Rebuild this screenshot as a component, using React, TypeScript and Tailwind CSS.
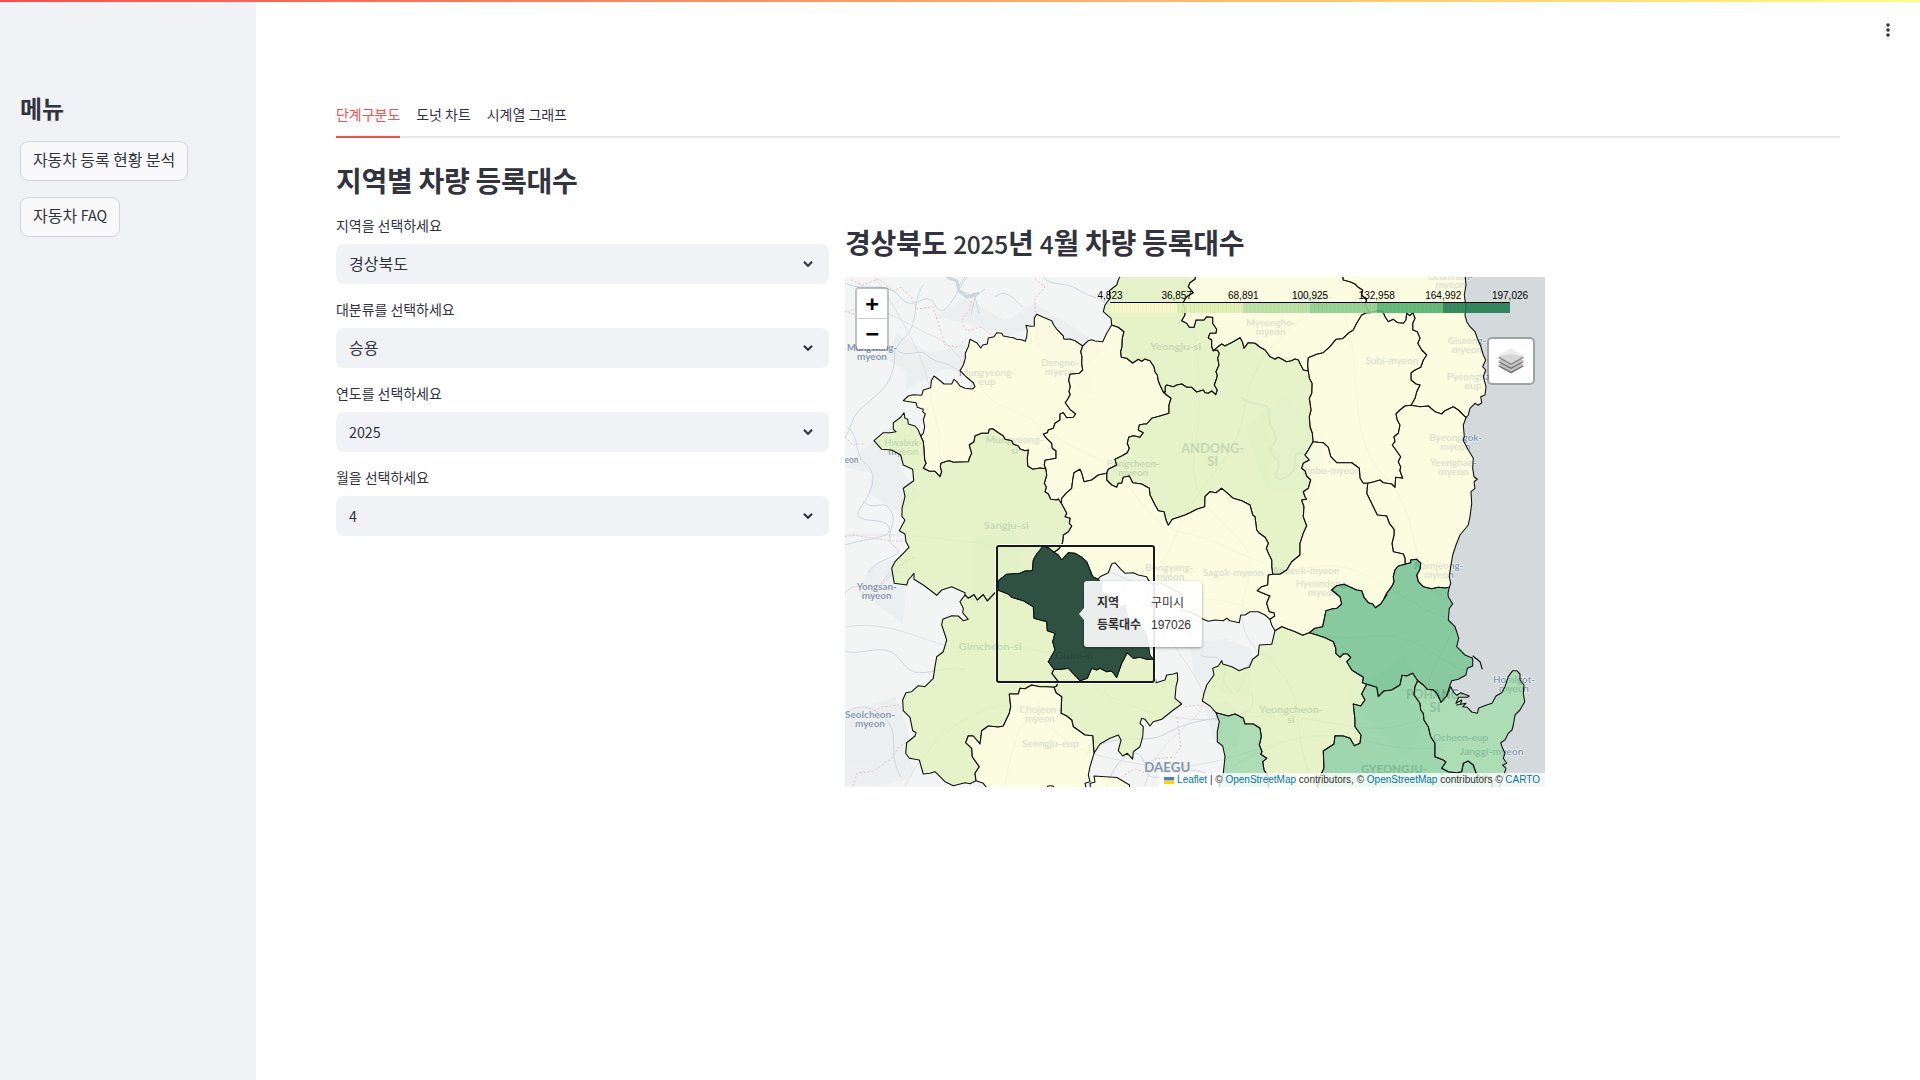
import React from "react";

type Sheet = [number, number, string];

// Survey sheets: origin of the sheet, used to place its traced outlines.
const A: [number, number] = [840, 210];
const B: [number, number] = [1190, 270];
const C: [number, number] = [840, 400];
const D: [number, number] = [1190, 400];
const E: [number, number] = [840, 590];
const F: [number, number] = [1190, 590];
const G: [number, number] = [1040, 270];
const H: [number, number] = [1000, 530];

const s = (o: [number, number], pts: string): Sheet => [o[0], o[1], pts];

// Outlines are stored in thirds of a pixel relative to the sheet origin.
const trace = (sheets: Sheet[]): number[][] =>
  sheets.flatMap(([ox, oy, pts]) =>
    pts.split(" ").map((p) => {
      const [x, y] = p.split(",").map(Number);
      return [ox + x / 3 - 845, oy + y / 3 - 277];
    })
  );

// Borders shared between neighbouring districts.
const arcs: Record<string, number[][]> = {
  munOut: trace([
    s(A, "728,408 705,392 690,387 672,388 670,378 648,355 641,345 635,332 610,322 590,313 583,325 583,348 570,349 558,346 562,362 560,380 556,394 545,389 530,388 520,383 510,382 490,378 485,370 470,368 462,380 445,384 442,402 428,405 422,414 410,398 390,388 385,410 376,430 376,445 370,465 360,482 380,502 400,518 405,530 398,537 375,535 360,528 350,515 342,508 335,522 312,522 298,510 282,498 274,512 272,533 250,540 245,556 220,554 205,558 190,572"),
    s(C, "228,8 232,22 250,28 248,35 256,42 250,60 254,80 250,100 242,108"),
  ]),
  munSan: trace([
    s(C, "242,108 250,125 252,150 254,180 258,190 250,205 268,214 285,214 300,230 305,215 301,200 303,190 320,184 328,182 340,187 385,185 390,170 395,160 388,135 402,125 405,108 425,100 445,100 448,88 458,86 475,98 490,108 495,118 515,122 520,133 535,138 540,147 555,152 565,150 562,175 563,198 578,208 600,204 617,206"),
  ]),
  munYec: trace([
    s(A, "728,408 722,425 726,440 725,460 728,480 718,490 690,493 686,510 691,530 687,545 691,553 685,565 676,578"),
    s(C, "690,28 707,42 700,52 680,53 670,38 660,42 660,60 645,70 640,85 625,90 622,98 610,102 620,115 635,130 637,145 648,152 648,175 615,181 613,195 617,206"),
  ]),
  yecSan: trace([s(C, "617,206 620,225 613,250 619,262 615,275 625,282 632,298 650,300 655,297 664,310")]),
  sanUis: trace([s(C, "664,310 672,325 680,340 675,350 690,355 688,370 695,378 685,395 670,405 668,425 665,435 655,448 642,457")]),
  yecUis: trace([s(C, "664,310 665,295 680,278 695,265 698,240 702,218 720,208 725,220 732,245 755,240 775,225 800,220")]),
  yecAnd: trace([
    s(C, "800,220 805,208 830,195 825,178 845,168 862,158 868,145 862,130 866,112 880,107 900,112 910,98 895,90 898,75 912,72 920,72 935,55 960,48 987,40"),
    s(G, "387,405 393,385 380,375 370,366"),
  ]),
  yecYeo: trace([s(G, "215,165 235,172 252,185 247,205 246,230 242,245 244,262 260,265 278,279 295,268 305,274 315,267 330,272 342,290 345,305 352,315 355,332 360,345 370,366")]),
  yecOut: trace([s(G, "215,165 200,190 188,215 165,213 155,209 145,212 128,228")]),
  yeoOut: trace([s(G, "215,165 213,145 190,125 195,105 210,85 208,62 230,45 235,30 242,15")]),
  yeoBon: trace([s(G, "520,242 515,230 515,210 505,203 510,190 528,190 530,178 518,160 518,142 500,140 492,150 468,150 462,172 448,172 440,160 425,152 435,135 435,115 428,100 440,80 460,68 445,50 450,38 465,28 468,15")]),
  yeoAnd: trace([s(G, "520,242 532,240 538,250 533,265 537,285 528,305 532,315 530,325 523,345 532,360 527,374 515,363 505,370 495,368 490,360 470,366 455,352 440,352 425,342 410,345 400,350 380,345 376,350 376,366 370,366")]),
  andBon: trace([s(G, "520,242 532,232 545,222 555,228 580,215 600,203 607,215 612,235 625,218 645,220 660,232 675,240 690,260 705,268 715,262 740,275 755,272 765,267 775,270 782,285 790,300 805,303")]),
  bonYan: trace([s(B, "355,303 353,285 355,263 380,253 400,248 420,230 438,208 458,206 475,190 490,180 500,160 515,135 530,128 540,128")]),
  bonUlj: trace([s(B, "540,128 525,105 530,90 515,75 518,60 505,52 495,42 480,35 460,30 458,15")]),
  yanUlj: trace([s(B, "540,128 560,122 578,124 585,140 595,155 610,148 618,155 625,158 640,160 648,150 650,130 660,137 668,128 675,145 668,160 668,180 682,185 690,205 683,220 695,240 710,255 700,270 692,292 675,300 663,308 663,330 678,342 690,345 680,365 675,385 663,406")]),
  uljSea: trace([s(B, "825,15 828,45 823,75 828,110 825,135 830,155 840,170 855,185 862,205 872,228 880,255 887,270 878,290 887,300 880,320 888,350 885,375 872,380 875,398 865,406 855,400 840,415 835,435 828,443")]),
  uljDeo: trace([s(B, "663,406 690,410 715,408 735,425 755,432 765,422 790,410 805,420 828,443")]),
  yanDeo: trace([
    s(B, "663,406 645,408 630,420 618,432 622,450 630,465 625,490 612,500 615,515 607,525 618,540"),
    s(D, "632,170 625,185 632,200 630,212 638,235 617,232 615,262 605,252 580,248 570,240 550,246 533,250"),
  ]),
  yanAnd: trace([s(B, "355,303 358,325 366,340 365,370 358,385 363,420 358,440 360,470 367,490 369,515")]),
  yanChe: trace([s(D, "369,125 385,127 400,128 415,142 422,170 440,188 485,188 508,205 510,235 520,250 533,250")]),
  andChe: trace([s(D, "369,125 355,150 345,165 358,180 340,190 335,205 345,212 350,228 362,240 355,265 340,275 345,290 350,298 335,300 342,320 340,350 350,377 340,400 330,430 330,465 305,485 290,510 270,523 248,523")]),
  andUis: trace([
    s(C, "800,220 800,240 815,255 830,262 835,250 845,250 850,232 868,228 878,248 905,252 928,265 930,285 945,315 955,332 972,335 978,360 985,376 997,358 1020,350 1035,345 1050,338"),
    s(D, "20,328 44,320 45,290 60,275 78,278 95,265 110,278 130,295 155,302 180,315 188,345 195,350 200,390 208,400 225,412 235,430 229,445 235,460 245,480 245,500 248,523"),
  ]),
  uisChe: trace([
    s(D, "248,523 235,525 233,555 215,560 202,572 225,582 240,588"),
    s(F, "238,20 230,40 238,65 252,68 254,78 240,88"),
  ]),
  cheGun: trace([s(F, "240,88 245,105 255,122")]),
  cheYon: trace([s(F, "255,122 275,110 295,118 315,125 338,136 358,128")]),
  chePoh: trace([
    s(F, "358,128 375,115 398,110 408,62 425,57 440,55 455,42 450,20"),
    s(D, "425,570 440,557 462,553 478,560 500,570 515,572"),
    s(F, "522,22 535,38 548,42 556,53 572,42 590,15"),
    s(D, "582,596 590,580 605,560 612,545 610,530 615,510 625,498 645,493"),
  ]),
  cheDeo: trace([s(D, "533,250 530,280 540,300 552,325 562,345 590,348 598,370 612,388 612,405 606,430 610,455 640,462 645,475 645,493")]),
  deoPoh: trace([s(D, "645,493 662,488 662,480 680,478 692,490 690,508 680,525 685,545 700,560 725,566 745,562 765,564 778,562")]),
  deoSea: trace([s(D, "828,53 820,75 823,110 819,120 835,150 850,175 848,205 852,230 862,238 852,245 855,265 843,275 845,310 840,350 835,375 810,405 798,435 788,465 782,500 778,530 782,550 778,562")]),
  pohSea: trace([
    s(D, "778,562 774,580"),
    s(F, "775,20 788,42 778,55 775,90 795,110 800,125 806,145 800,170 825,195 848,205 848,228 832,235 828,255 805,268 785,272 780,285 770,318"),
  ]),
  pohSou: trace([s(F, "770,318 753,337 740,310 730,300 712,298 700,285 683,272")]),
  pohGye: trace([s(F, "683,272 668,250 650,258 636,256 630,285 605,300 582,303 565,320 560,292 530,283")]),
  yonPoh: trace([s(F, "358,128 380,135 405,143 430,155 437,175 437,190 450,202 460,192 472,192 482,202 470,215 485,240 500,250 520,262 517,278 530,283")]),
  yonGye: trace([s(F, "530,283 515,312 525,330 512,348 490,342 495,390 495,410 513,435 510,460 493,467 480,445 460,438 435,437 432,462 400,483 402,535 385,570 380,600")]),
  yonOut: trace([s(F, "255,122 245,163 208,165 205,195 188,208 178,232 165,235 148,242 125,230 98,222 95,212 85,228 68,235 72,255 50,285 42,310 37,333 60,348 78,368")]),
  yonGys: trace([s(F, "78,368 115,378 135,372 160,385 165,402 190,402 210,415 214,440 208,465 216,485 212,493 230,505 218,515 222,540 235,560 235,600")]),
  gysOut: trace([s(F, "78,368 88,395 82,425 82,455 98,468 105,500 100,550 85,600")]),
  gyeSou: trace([s(F, "683,272 675,290 672,315 690,340 692,360 700,370 702,390 715,410 722,440 735,460 735,500 760,510 768,516 755,535 775,545 800,548 815,545 820,520 835,513 850,525 858,548 870,560 890,558 905,570 910,600")]),
  souSea: trace([s(F, "770,318 782,290 792,308 800,316 812,308 838,318 832,322 806,322 798,340 815,330 812,343 800,345 828,340 818,350 832,352 845,366 862,370 866,354 890,345 906,340 918,318 935,308 945,290 955,260 968,242 980,242 990,252 990,270 1002,285 1000,310 1004,335 990,360 975,375 970,405 966,420 955,430 945,450 932,458 936,470 945,490 940,505 950,520 938,525 948,535 940,560 925,600")]),
  uisSou: trace([
    s(F, "240,88 225,75 205,65 180,65 165,75 152,75 148,98 120,92 110,85 100,92 75,90 55,94 40,88"),
    s(H, "600,262 580,250 565,245 545,240 545,190 520,180 505,170 485,160 460,165 445,150 440,140 415,135 400,128 375,130 360,115 345,98 335,102 325,128 300,140 295,148"),
  ]),
  gumUis: trace([s(H, "162,67 175,75 185,90 205,68 225,70 245,82 260,95 270,120 278,140 295,148")]),
  gumSan: trace([s(H, "162,67 148,55 130,48 110,72 100,90 97,122 75,123 60,130 20,133 -5,152 -7,180")]),
  gumGim: trace([
    s(E, "473,0 505,12 515,22 550,32 580,50 582,85 620,95 622,122 645,130 638,155 645,180 625,215 642,238"),
  ]),
  gumChi: trace([s(E, "642,238 665,238 685,235 720,272 742,265 755,235 770,240 780,235 800,245 815,243 830,262 845,220 862,188 880,205 900,202 920,208 940,207")]),
  gumEast: trace([s(H, "295,148 305,160 302,185 340,205 350,240 375,225 385,270 420,285 440,315 450,375 460,387")]),
  chiEast: trace([s(E, "940,207 945,250 948,278")]),
  chiOut: trace([s(E, "948,278 975,270 980,255 1000,252 1012,248 1013,270 1008,290 1005,325 1025,342 1000,360 965,388 940,395 930,408 915,388 905,385 900,400 910,410 908,440 900,470 880,485 878,507 862,490 848,498 835,482 843,450 835,435 810,445 780,462 762,490")]),
  gimChi: trace([s(E, "642,238 636,250 655,275 650,288 642,292")]),
  seoChi: trace([s(E, "642,292 648,308 665,320 663,370 680,378 695,390 700,410 735,435 758,437 762,490")]),
  seoGim: trace([s(E, "642,292 620,290 600,290 575,285 555,296 540,295 535,312 508,312 512,350 508,370 490,408 475,411 445,408 425,422 420,462 400,438 385,437 377,458 395,475 397,500 418,530 405,550 408,572")]),
  seoOut: trace([s(E, "762,490 750,530 745,555 750,575 735,580 740,600 445,600 430,580 408,572")]),
  sanGim: trace([s(E, "375,15 385,25 402,14 412,30 430,14 442,33 460,14 473,0")]),
  gimOut: trace([s(E, "375,15 360,35 370,55 368,68 385,88 370,92 355,78 335,77 308,88 305,105 312,125 320,150 310,185 290,200 284,235 280,265 255,290 235,287 215,305 198,308 188,330 190,362 210,382 218,422 228,428 225,438 200,458 197,490 208,505 238,510 250,552 270,550 285,545 315,575 340,587 375,578 390,581 408,572")]),
  sanOut: trace([s(C, "242,108 235,90 225,78 205,72 203,58 195,55 192,38 182,52 160,68 160,88 168,95 150,98 130,98 102,122 125,148 155,150 182,165 190,195 218,208 221,242 190,265 195,290 186,325 186,350 195,360 178,392 195,402 198,425 207,442 190,460 165,485 155,505 163,550 200,555 205,540 222,520 222,538 250,555 270,570 290,586 305,570 335,560 375,578 375,585")]),
};

const ring = (names: string) => {
  const pts: number[][] = [];
  names.split(" ").forEach((n) => {
    const arc = n[0] === "-" ? [...arcs[n.slice(1)]].reverse() : arcs[n];
    pts.push(...arc);
  });
  return pts.map((p) => `${p[0].toFixed(1)},${p[1].toFixed(1)}`).join(" ");
};

const YELLOW = "#ffffd9";
const LIME = "#dff2b6";

const regions: { fill: string; path: string }[] = [
  { fill: YELLOW, path: "munOut munSan -munYec" },
  { fill: YELLOW, path: "yecOut munYec yecSan yecUis yecAnd -yecYeo" },
  { fill: LIME, path: "-yeoOut yecYeo -yeoAnd yeoBon" },
  { fill: YELLOW, path: "-yeoBon andBon bonYan bonUlj" },
  { fill: YELLOW, path: "-bonUlj yanUlj uljDeo -uljSea" },
  { fill: YELLOW, path: "bonYan yanUlj yanDeo -yanChe -yanAnd" },
  { fill: LIME, path: "andBon yanAnd andChe -andUis yecAnd -yeoAnd" },
  { fill: YELLOW, path: "uljDeo deoSea -deoPoh -cheDeo -yanDeo" },
  { fill: YELLOW, path: "andUis uisChe uisSou -gumUis -sanUis yecUis" },
  { fill: YELLOW, path: "yanChe cheDeo -chePoh -cheYon -cheGun -uisChe -andChe" },
  { fill: LIME, path: "sanOut sanGim -gumSan -sanUis -yecSan -munSan" },
  { fill: LIME, path: "gimOut -seoGim -gimChi -gumGim -sanGim" },
  { fill: LIME, path: "gumChi chiEast chiOut -seoChi -gimChi" },
  { fill: YELLOW, path: "seoChi seoOut -seoGim" },
  { fill: "#59b87a", path: "deoPoh pohSea pohSou pohGye -yonPoh chePoh" },
  { fill: LIME, path: "cheYon yonPoh yonGye -yonGys -yonOut" },
  { fill: "#8dd399", path: "yonGys -gysOut" },
  { fill: "#79cb8e", path: "-yonGye -pohGye gyeSou" },
  { fill: "#8dd399", path: "pohSou gyeSou -souSea" },
];

type Label = [number, number, number, string, string?, number?];
// x, y (centre of the first line), width, first line, second line, font size
const labels: Label[] = [
  [872, 348, 50, "Mungwang-", "myeon"],
  [987, 372.7, 56, "Mungyeong-", "eup"],
  [1060, 363, 38, "Dongno-", "myeon"],
  [1175.7, 346.3, 51, "Yeongju-si", undefined, 10],
  [1270.7, 322.7, 49, "Myeongho-", "myeon"],
  [1312, 297, 40, "Sangun-", "myeon"],
  [1450.5, 276.5, 45, "Geumnam-", "myeon"],
  [1467, 341, 38, "Giseong-", "myeon"],
  [1473, 376.7, 52, "Pyeonghae-", "eup"],
  [1392, 360.7, 53, "Subi-myeon"],
  [1455.7, 438.3, 53, "Byeonggok-", "myeon"],
  [1453.5, 462.7, 47, "Yeonghae-", "myeon"],
  [1212.7, 448.3, 63, "ANDONG-", "SI", 13],
  [1133.3, 463.7, 53, "Pungcheon-", "myeon"],
  [1014.5, 440, 58, "Mungyeong-", "si", 10],
  [903.3, 442.7, 38, "Hwabuk-", "myeon"],
  [851.5, 460, 14, "eon"],
  [1006.3, 525.3, 45, "Sangju-si", undefined, 10],
  [876.7, 586.7, 40, "Yongsan-", "myeon"],
  [1331.7, 470.7, 57, "Jinbo-myeon"],
  [1233.3, 573.3, 61, "Sagok-myeon"],
  [1305.7, 571, 67, "Andeok-myeon"],
  [1322.7, 584.3, 54, "Hyeondong-", "myeon"],
  [1439, 565.7, 49, "Namjeong-", "myeon"],
  [1169.3, 568.3, 48, "Bongyang-", "myeon"],
  [990, 646.7, 63, "Gimcheon-si", undefined, 10],
  [1074, 655.7, 38, "Gumi-si", undefined, 10],
  [870, 715.3, 50, "Seolcheon-", "myeon"],
  [1040, 710, 41, "Chojeon-", "myeon"],
  [1050.3, 744, 57, "Seongju-eup"],
  [1167.3, 767.3, 46, "DAEGU", undefined, 13],
  [1291, 709.7, 64, "Yeongcheon-", "si", 10],
  [1435, 694.3, 58, "POHANG-", "SI", 13],
  [1514, 680, 42, "Homigot-", "myeon"],
  [1460.7, 738, 55, "Ocheon-eup"],
  [1491.7, 751.7, 64, "Janggi-myeon"],
  [1394, 769, 66, "GYEONGJU-", undefined, 12],
];

const rivers = [
  "M0,6 C20,16 40,2 55,20 S80,10 90,28 S110,16 122,0 M112,12 l8,-12 m-4,14 l14,6 l4,16 m-4,-16 l10,-8 m-10,8 l-4,18",
  "M78,8 C66,28 75,45 60,60 S52,76 48,92 S36,115 20,128 S8,150 0,160",
  "M50,70 C58,84 74,70 82,78 S98,84 108,90 S120,98 132,94 S118,110 128,116",
  "M2,150 C16,160 8,176 20,186 S30,210 16,230 S40,238 44,250 S24,260 0,268",
  "M18,224 C30,236 38,220 46,234 S36,260 50,270 S30,280 24,296",
  "M0,316 C14,300 22,320 36,308 S52,286 70,280",
  "M0,374 C20,380 40,362 56,384 S84,390 120,392",
  "M0,438 C16,420 40,436 46,450 S44,480 56,500",
  "M150,20 C162,10 170,24 178,30 M198,0 C206,10 220,4 232,12 S260,22 262,28",
  "M356,378 C366,384 372,374 378,388 S372,398 384,412 S394,404 404,388 S420,376 428,384",
  "M240,478 C270,452 300,468 318,458 S350,444 380,440 S410,430 406,414",
  "M276,304 C280,314 286,322 296,326",
  "M262,509 C270,480 296,462 300,490 S340,478 366,500",
];

const roads = [
  "M0,36 C30,20 60,48 90,60 S130,120 160,130 S220,170 250,180 S300,250 340,256 S420,300 470,290 S560,330 600,340",
  "M0,258 L56,258 C110,262 170,270 220,280 S300,320 360,322 S460,370 520,360 S600,400 640,396",
  "M30,0 C50,30 80,80 84,110 S100,160 92,190",
  "M0,350 C60,340 90,380 150,372 S220,390 250,410 S330,450 400,440 S520,470 580,440",
  "M340,0 C350,60 360,110 350,170 S380,240 400,270 S370,340 420,380 S440,450 470,509",
  "M160,509 C170,450 180,430 230,400 S300,330 330,260 S390,190 400,130 S440,60 470,30",
  "M500,40 C520,100 500,160 540,200 S560,300 600,320 S560,400 590,430",
  "M60,509 C80,470 110,440 150,430 S210,470 260,480 S330,500 420,470 S520,480 600,470",
  "M388,490 C400,480 420,474 446,462 M300,509 C310,470 330,460 350,440 S350,400 330,370",
];

const hills = [
  "M90,40 L120,20 160,44 190,26 240,58 262,72 240,90 250,118 236,114 190,68 188,50 160,60 140,52 120,46Z",
  "M84,76 L128,66 118,94 100,92 84,100 60,114 62,94 40,82 52,56Z",
  "M0,190 L40,152 74,160 54,190 76,220 54,236 24,216 26,196Z",
  "M24,290 L64,278 58,346 34,330 16,312Z",
  "M0,436 L50,420 62,450 68,500 30,509 0,509Z",
  "M344,366 L380,362 406,372 404,420 380,416 350,400Z",
  "M360,430 L382,424 396,440 392,470 368,462Z",
  "M400,150 L440,120 480,160 470,220 420,210Z",
  "M500,420 L560,380 590,430 560,480Z",
  "M130,260 L170,250 180,300 130,330Z",
];

function MapLabels() {
  return (
    <g fontFamily="Lato, 'Open Sans', sans-serif" fontWeight={700} textAnchor="middle" stroke="#f4f6f8" strokeWidth={1.2} strokeLinejoin="round" style={{ paintOrder: "stroke" }}>
      {labels.map(([x, y, w, a, b, size = 9.2], i) => (
        <g key={i} fontSize={size} fill={size > 11 ? "#8494a8" : "#8998ad"}>
          <text x={x - 845} y={y - 277 + size * 0.33} textLength={w} lengthAdjust="spacingAndGlyphs">{a}</text>
          {b && (
            <text x={x - 845} y={y - 277 + size * 0.33 + (size > 11 ? 13.4 : size > 9.5 ? 10.2 : 8.9)} textLength={b === "myeon" ? 30 : b === "eup" ? 17 : undefined} lengthAdjust="spacingAndGlyphs">{b}</text>
          )}
        </g>
      ))}
    </g>
  );
}

function Choropleth() {
  const coast = ring("uljSea deoSea pohSea souSea");
  return (
    <svg className="block h-full w-full" viewBox="0 0 700 510">
      <rect width="700" height="510" fill="#f3f4f4" />
      <g fill="#e8eded" opacity="0.6">
        {hills.map((d, i) => <path key={i} d={d} />)}
      </g>
      <g fill="none" stroke="#dfe2e4" strokeWidth="1">
        {roads.map((d, i) => <path key={i} d={d} />)}
      </g>
      <g fill="none" stroke="#ccd6df" strokeWidth="1">
        {rivers.map((d, i) => <path key={i} d={d} />)}
        <path d="M396,120 c10,12 30,2 28,18 s14,18 4,30 s12,12 4,26 s20,8 18,-10 s20,2 14,-14" strokeWidth="2" />
        <path d="M102,0 l10,4 2,10 8,6 12,-4" strokeWidth="3" />
      </g>
      <g fill="none" stroke="#eebcc4" strokeWidth="1" strokeDasharray="2 2">
        <path d="M6,3 L18,8 34,2 48,14 56,10 66,20 72,32 88,30 92,42 100,68 114,70 122,60" />
        <path d="M0,34 L12,38 M128,16 L124,34 116,44 122,54 136,50 150,60 M190,2 L200,10 190,22 190,42 194,68" />
        <path d="M0,160 L8,168 20,166 M0,260 L8,258 20,260 46,264 60,264" />
        <path d="M64,296 L46,294 36,306 24,318 14,314 M26,436 L36,430 54,428 58,436" />
        <path d="M8,509 L12,496 28,494 46,482 54,470 62,464 M340,430 L352,428 362,430 M332,440 L336,470 330,478 M276,500 L290,492 300,496 308,482 330,480" />
      </g>
      <polygon points={`${coast} 700,520 700,-10`} fill="#d4dadc" />
      <MapLabels />
      <g stroke="#111" strokeWidth="1.1" strokeLinejoin="round" fillOpacity="0.7">
        {regions.map((r) => <polygon key={r.path} points={ring(r.path)} fill={r.fill} />)}
        <polygon points="249,499 272,500.5 284.5,508 284.5,514 246,514 245,506.5 250,505" fill={YELLOW} />
        <path d="M627.7,378.7 L635,384.7 637.3,392.3" fill="none" strokeWidth="1.2" />
        <path d="M202,509.5 q3.500,-1.500 7,0" fill="none" />
      </g>
      <polygon points={ring("gumUis gumEast -gumChi -gumGim -gumSan")} fill="#193f2f" fillOpacity="0.9" stroke="#0d1512" strokeWidth="1" />
      <rect x="150.500" y="267.500" width="160" height="139" rx="3" fill="none" stroke="#fff" strokeWidth="1" />
      <rect x="152" y="269" width="157" height="136" rx="2" fill="none" stroke="#15191b" strokeWidth="2" />
    </svg>
  );
}

const legend = [
  { x: 265, text: "4,823", color: "bg-[#f9fac8]" },
  { x: 331.7, text: "36,857", color: "bg-[#def0af]" },
  { x: 398.3, text: "68,891", color: "bg-[#b4df9f]" },
  { x: 465, text: "100,925", color: "bg-[#8ccf8d]" },
  { x: 531.7, text: "132,958", color: "bg-[#54b56f]" },
  { x: 598.3, text: "164,992", color: "bg-[#207f50]" },
  { x: 665, text: "197,026", color: "" },
];

function Legend() {
  return (
    <div className="absolute left-[265px] top-[12px] w-[400px] text-[10px] leading-[14px] text-black">
      <div className="relative h-[13px]">
        {legend.map((l) => (
          <span key={l.text} className="absolute top-0 -translate-x-1/2" style={{ left: l.x - 265 }}>{l.text}</span>
        ))}
      </div>
      <div className="h-px bg-black" />
      <div className="relative flex h-[10px] opacity-90">
        {legend.slice(0, 6).map((l) => <div key={l.text} className={`flex-1 ${l.color}`} />)}
        <div className="absolute inset-0 bg-[repeating-linear-gradient(90deg,rgba(0,40,20,0.04)_0_1px,transparent_1px_4px)]" />
      </div>
    </div>
  );
}

function LayersIcon() {
  return (
    <svg width="26" height="26" viewBox="0 0 26 26">
      <path d="M0,18.200 L13,11.500 26,18.200 13,25.500Z" fill="#747474" />
      <path d="M0,16.800 L13,10 26,16.800 13,23.800Z" fill="#bdbdbd" />
      <path d="M0,14 L13,7 26,14 13,21Z" fill="#747474" />
      <path d="M0,12.700 L13,5.700 26,12.700 13,19.600Z" fill="#c4c4c4" />
      <path d="M0,9.800 L13,3 26,9.800 13,17Z" fill="#858585" />
      <path d="M0,8.200 L13,0.800 26,8.200 13,15.600Z" fill="#d5d5d5" />
      <path d="M0,8.200 L13,0.800 26,8.200 13,6Z" fill="#ececec" />
    </svg>
  );
}

function MapPanel() {
  return (
    <div className="relative h-[510px] w-[700px] overflow-hidden font-['Liberation_Sans','Noto_Sans_CJK_KR',sans-serif]">
      <Choropleth />
      <div className="absolute left-[10px] top-[10px] w-[34px] rounded-[4px] border-2 border-black/20 bg-clip-padding font-['DejaVu_Sans_Mono',monospace] text-[22px] font-bold text-black">
        <div className="flex h-[30px] items-center justify-center rounded-t-[2px] border-b border-[#ccc] bg-white leading-[30px]">+</div>
        <div className="flex h-[30px] items-center justify-center rounded-b-[2px] bg-white leading-[30px]">−</div>
      </div>
      <Legend />
      <div className="absolute right-[10px] top-[60px] flex h-[48px] w-[48px] items-center justify-center rounded-[5px] border-2 border-black/25 bg-white bg-clip-padding">
        <LayersIcon />
      </div>
      <div className="absolute left-[239px] top-[304px] h-[66px] w-[118px] rounded-[3px] bg-white/90 pl-[13px] pt-[13px] text-[12px] text-[#333] shadow-[0_1px_3px_rgba(0,0,0,0.4)]">
        <svg className="absolute -left-[5px] top-[27px]" width="5" height="12" viewBox="0 0 5 12"><path d="M5,0 L0,6 5,12Z" fill="#fff" fillOpacity="0.9" /></svg>
        <div className="grid grid-cols-[54px_1fr] gap-y-[4px] leading-[18px]">
          <b>지역</b><span>구미시</span>
          <b>등록대수</b><span>197026</span>
        </div>
      </div>
      <div className="absolute bottom-0 right-0 flex h-[14px] items-center whitespace-pre bg-white/80 px-[5px] text-[10px] leading-[14px] text-[#333]">
        <svg className="mr-[3px]" width="10" height="7" viewBox="0 0 10 7"><path fill="#4C7BE1" d="M0 0h10v3.500H0z" /><path fill="#FFD500" d="M0 3.500h10V7H0z" /></svg>
        <span className="text-[#0078a8]">Leaflet</span>
        <span> | © </span>
        <span className="text-[#0078a8]">OpenStreetMap</span>
        <span> contributors, © </span>
        <span className="text-[#0078a8]">OpenStreetMap</span>
        <span> contributors © </span>
        <span className="text-[#0078a8]">CARTO</span>
      </div>
    </div>
  );
}

function Field({ label, value, latin }: { label: string; value: string; latin?: boolean }) {
  return (
    <div className="h-[84px]">
      <div className="h-[29px] text-[14px] leading-[21px] tracking-[-0.05px]">{label}</div>
      <div className="flex h-[40px] items-center justify-between rounded-lg bg-[#f0f2f6] pl-[13px] pr-[16px]">
        <span className={latin ? "text-[14.3px] leading-6" : "-mt-[3px] text-[16px] leading-6"}>{value}</span>
        <svg width="10" height="8" viewBox="0 0 10 8" fill="none" stroke="#31333f" strokeWidth="2"><path d="M0.900 1.800 L5 5.800 9.100 1.800" /></svg>
      </div>
    </div>
  );
}

export default function App() {
  return (
    <div className="relative flex h-[1080px] w-[1920px] overflow-hidden bg-white font-['Noto_Sans_CJK_KR',sans-serif] text-[#31333f]">
      <div className="absolute left-0 top-0 h-[2px] w-full bg-[linear-gradient(90deg,#ff4b4b,#fffd80)]" />
      <aside className="flex w-[256px] flex-col items-start bg-[#f0f2f6] pl-[20px] pt-[93px]">
        <h2 className="text-[24px] font-bold leading-[29px]">메뉴</h2>
        <button className="mt-[19px] flex h-[40px] items-center rounded-lg border border-[#d3d4d9] bg-[#f9f9fb] px-[12px] pb-[4px] text-[16px] tracking-[-0.1px]">자동차 등록 현황 분석</button>
        <button className="mt-[16px] flex h-[40px] items-center whitespace-pre rounded-lg border border-[#d3d4d9] bg-[#f9f9fb] px-[12px] pb-[4px] text-[16px]">자동차 <span className="text-[14.3px]">FAQ</span></button>
      </aside>
      <main className="w-[1664px] px-[80px] pt-[98px]">
        <nav className="flex h-[40px] gap-[16px] border-b-2 border-[#e9e9eb] text-[14px] leading-[32px] tracking-[-0.03px]">
          <span className="-mb-[2px] border-b-2 border-[#ff4b4b] text-[#ff4b4b]">단계구분도</span>
          <span>도넛 차트</span>
          <span>시계열 그래프</span>
        </nav>
        <h3 className="mt-[25px] h-[52px] text-[28px] font-bold leading-[34px] tracking-[-0.27px]">지역별 차량 등록대수</h3>
        <div className="flex gap-[16px]">
          <section className="w-[493px]">
            <Field label="지역을 선택하세요" value="경상북도" />
            <Field label="대분류를 선택하세요" value="승용" />
            <Field label="연도를 선택하세요" value="2025" latin />
            <Field label="월을 선택하세요" value="4" latin />
          </section>
          <section>
            <h3 className="h-[62px] whitespace-pre pt-[10px] text-[28px] font-bold leading-[34px] tracking-[-0.25px]">경상북도 <span className="text-[24.5px] font-medium">2025</span>년 <span className="text-[24.5px] font-medium">4</span>월 차량 등록대수</h3>
            <MapPanel />
          </section>
        </div>
      </main>
      <svg className="absolute left-[1880px] top-[20px]" width="16" height="20" viewBox="0 0 16 20" fill="#31333f">
        <circle cx="8" cy="5" r="1.800" /><circle cx="8" cy="10" r="1.800" /><circle cx="8" cy="15" r="1.800" />
      </svg>
    </div>
  );
}
